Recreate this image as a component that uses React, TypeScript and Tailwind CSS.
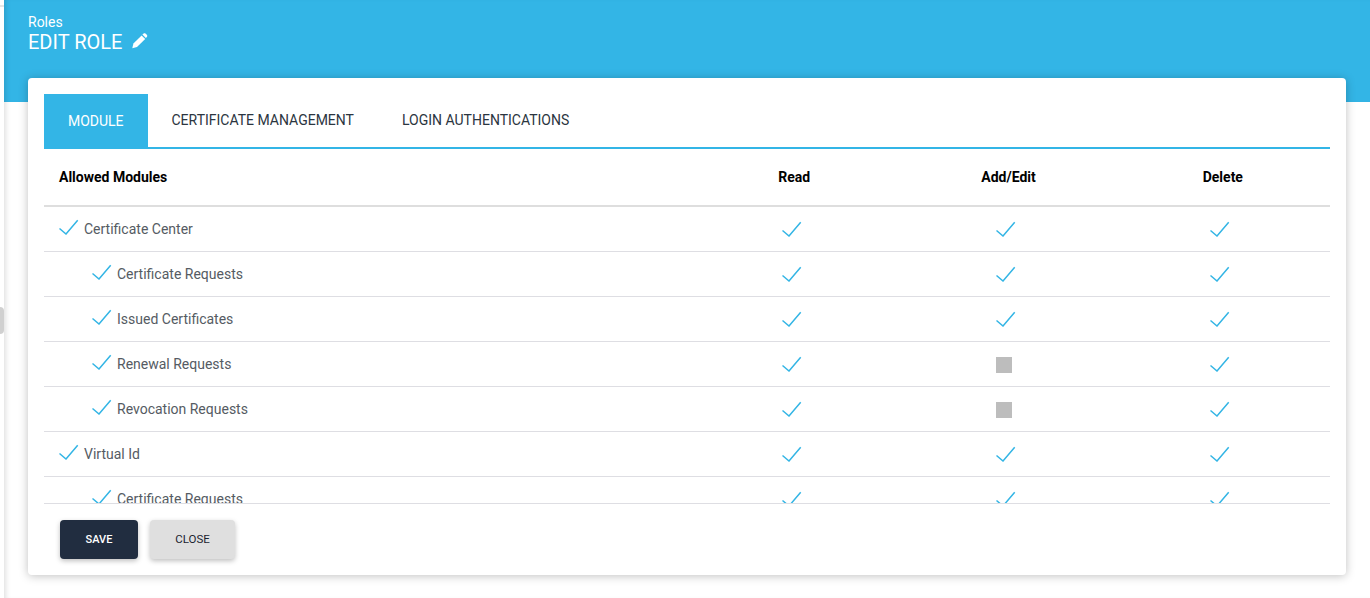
const Check = ({ className = "block" }: { className?: string }) => (
  <svg width="20" height="16" viewBox="0 0 20 16" fill="none" className={className}>
    <path d="M0.5 9.5L7 15L18.7 1.3" stroke="#33b5e5" strokeWidth="1.5" />
  </svg>
);

const Pencil = () => (
  <svg width="16" height="16" viewBox="0 0 16 16" fill="white" className="mb-[3px]">
    <path d="M0.3 15.3L1.4 10.4L9.6 2.4L13.2 6L5 14.1Z" />
    <path d="M10.4 1.6L11.4 0.7C12.1 0.1 13 0.1 13.7 0.7L14.8 1.8C15.4 2.5 15.4 3.4 14.8 4.1L13.9 5.1Z" />
  </svg>
);

const Square = () => <div className="mt-[2px] h-4 w-4 bg-[#bdbdbd]" />;

const rows = [
  { name: "Certificate Center", child: false, edit: true },
  { name: "Certificate Requests", child: true, edit: true },
  { name: "Issued Certificates", child: true, edit: true },
  { name: "Renewal Requests", child: true, edit: false },
  { name: "Revocation Requests", child: true, edit: false },
  { name: "Virtual Id", child: false, edit: true },
  { name: "Certificate Requests", child: true, edit: true },
];

const App = () => {
  return (
    <div className="relative flex h-[598px] overflow-hidden bg-white font-['Roboto',sans-serif]">
      <div className="relative w-1 shrink-0 bg-white">
        <div className="absolute left-0 top-[5px] h-[2px] w-1 bg-[#e6e6e6]" />
        <div className="absolute left-0 top-[307px] h-[27px] w-1 rounded-r-sm bg-[#d0d0d0]" />
      </div>
      <div className="relative flex-1 shadow-[inset_5px_0_5px_-3px_rgba(0,0,0,0.12)]">
        <div className="h-[102px] bg-[#33b5e6] pl-6 pt-[14px] text-white shadow-[inset_5px_0_5px_-3px_rgba(0,0,0,0.12)]">
          <div className="text-[14px] leading-[16px]">Roles</div>
          <div className="flex items-center gap-[10px] text-[20px] leading-[24px]">
            EDIT ROLE
            <Pencil />
          </div>
        </div>
        <div className="-mt-6 mx-6 flex h-[497px] flex-col rounded bg-white px-4 pt-4 shadow-[0_1px_10px_rgba(0,0,0,0.25)]">
          <div className="flex h-[55px] shrink-0 border-b-2 border-[#33b5e6] text-[14px]">
            <div className="flex h-[55px] w-[103.5px] items-center justify-center bg-[#33b5e6] text-white">MODULE</div>
            <div className="flex items-center px-6 text-[#2b3540]">CERTIFICATE MANAGEMENT</div>
            <div className="flex items-center px-6 text-[#2b3540]">LOGIN AUTHENTICATIONS</div>
          </div>
          <div className="grid h-[58px] shrink-0 grid-cols-6 items-center border-b-2 border-[#dedede] text-[14px] font-bold text-black">
            <div className="col-span-3 pl-[15px]">Allowed Modules</div>
            <div className="text-center">Read</div>
            <div className="text-center">Add/Edit</div>
            <div className="text-center">Delete</div>
          </div>
          <div className="h-[297px] shrink-0 overflow-hidden border-b border-[#dedee3]">
            {rows.map((row, i) => (
              <div key={i} className="grid h-[45px] grid-cols-6 items-center border-b border-[#dedee3] text-[14px] text-[#555b63]">
                <div className={row.child ? "col-span-3 flex items-center gap-[5px] pl-[48px]" : "col-span-3 flex items-center gap-[5px] pl-[15px]"}>
                  <Check className="mb-[4px] block" />
                  <span>{row.name}</span>
                </div>
                <div className="pl-[95px]"><Check /></div>
                <div className="pl-[95px]">{row.edit ? <Check /> : <Square />}</div>
                <div className="pl-[94px]"><Check /></div>
              </div>
            ))}
          </div>
          <div className="flex gap-3 pl-4 pt-4">
            <button className="h-[39px] w-[78px] rounded-sm bg-[#212d40] pt-[1px] text-[11px] font-medium text-white shadow-[0_2px_5px_rgba(0,0,0,0.25)]">SAVE</button>
            <button className="h-[39px] w-[85px] rounded-sm bg-[#dfdfdf] pt-[1px] text-[11.5px] font-normal text-[#1c2430] shadow-[0_2px_5px_rgba(0,0,0,0.25)]">CLOSE</button>
          </div>
        </div>
      </div>
    </div>
  );
};

export default App;
